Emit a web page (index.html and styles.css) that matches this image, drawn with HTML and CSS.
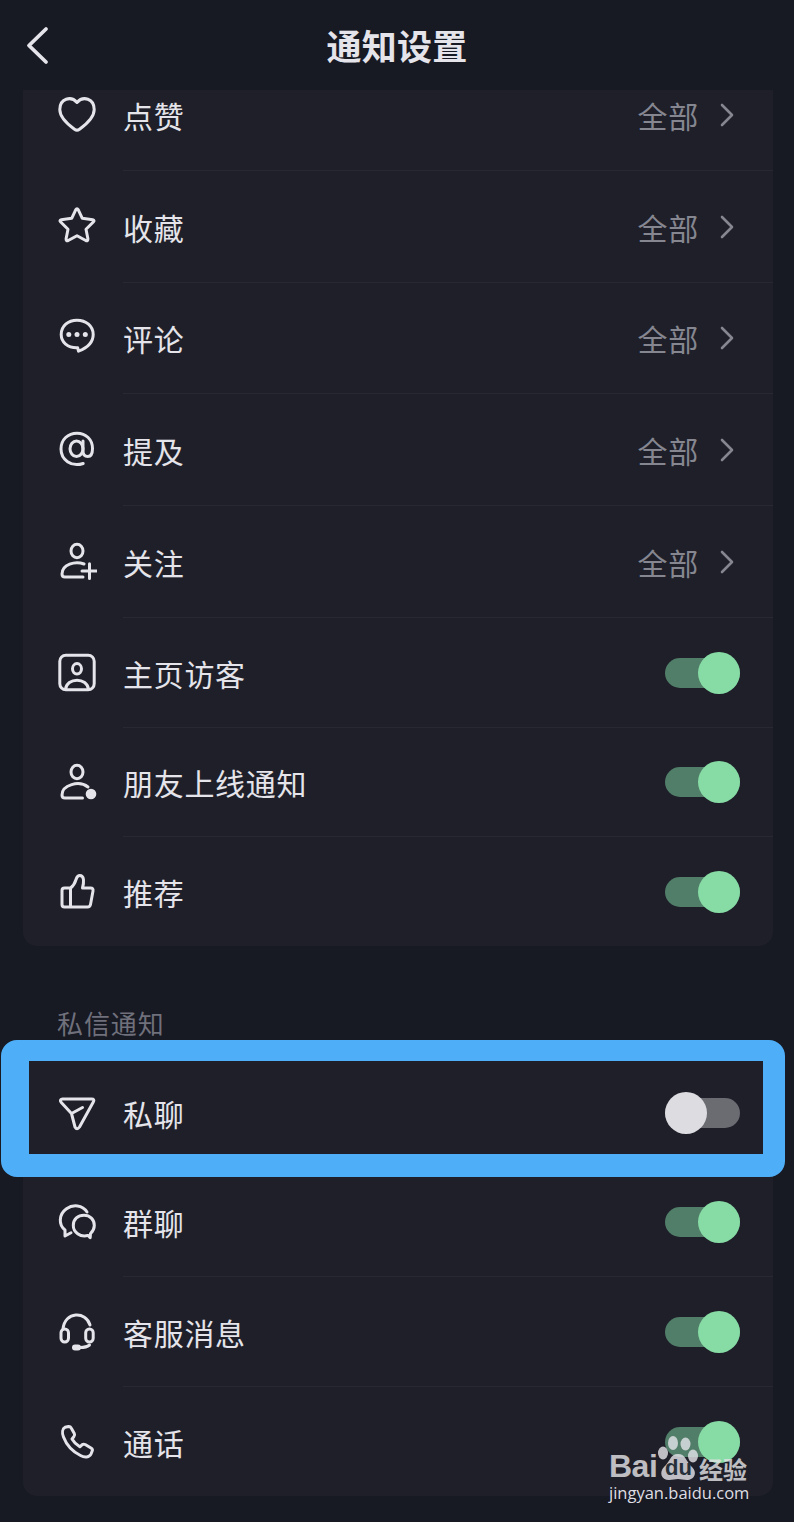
FILE: index.html
```
<!DOCTYPE html>
<html lang="zh-CN">
<head>
    <meta charset="UTF-8">
    <meta name="viewport" content="width=device-width, initial-scale=1.0">
    <title>通知设置</title>
    <link rel="stylesheet" href="styles.css">
</head>
<body>
    <header class="header">
        <svg class="back" viewBox="0 0 24 40"><path d="M20 4 L3 20.500 L20 37"/></svg>
        <h1>通知设置</h1>
    </header>

    <section class="card scrolled">
        <div class="row">
            <svg class="icon" viewBox="0 0 40 40"><path d="M20 7.500C14 .5 2.800 3.500 2.800 14.500C2.800 22 9.500 28.500 17.500 34.200Q20 36 22.500 34.200C30.500 28.500 37.200 22 37.200 14.500C37.200 3.500 26 .5 20 7.500Z"/></svg>
            <span class="label">点赞</span>
            <span class="value">全部</span>
            <svg class="arrow" viewBox="0 0 14 24"><path d="M2 2 L12 12 L2 22"/></svg>
        </div>
        <div class="row">
            <svg class="icon" viewBox="0 0 40 40"><path d="M18.700 2.800Q20 .5 21.300 2.800L25.300 11.300L35.700 12.800Q38 13.300 36.300 15L29 22.200L30.900 31.700Q31 34.400 28.800 33.500L20 28.700L11.200 33.500Q9 34.400 9.100 31.700L11 22.200L3.700 15Q2 13.300 4.300 12.800L14.700 11.300Z"/></svg>
            <span class="label">收藏</span>
            <span class="value">全部</span>
            <svg class="arrow" viewBox="0 0 14 24"><path d="M2 2 L12 12 L2 22"/></svg>
        </div>
        <div class="row">
            <svg class="icon" viewBox="0 0 40 40"><path d="M20.700 29.800C10.500 30.300 4.200 24 4.200 16.500C4.200 8 11 2.200 20 2.200S36.200 8 36.200 16.500C36.200 25 28.500 30.500 21.500 33.200Z"/><g class="solid"><circle cx="11.800" cy="16.500" r="2.500"/><circle cx="20" cy="16.500" r="2.500"/><circle cx="28.300" cy="16.500" r="2.500"/></g></svg>
            <span class="label">评论</span>
            <span class="value">全部</span>
            <svg class="arrow" viewBox="0 0 14 24"><path d="M2 2 L12 12 L2 22"/></svg>
        </div>
        <div class="row">
            <svg class="icon" viewBox="0 0 40 40"><path d="M26.200 33.500C14 37.500 4 29.500 4 19C4 9.500 11 3.200 20 3.200S35.500 9.500 35.500 18.500C35.500 24 34 26.500 30.800 26.500S26 24.500 26 21V11"/><ellipse cx="19.500" cy="18.700" rx="6.500" ry="7.800"/></svg>
            <span class="label">提及</span>
            <span class="value">全部</span>
            <svg class="arrow" viewBox="0 0 14 24"><path d="M2 2 L12 12 L2 22"/></svg>
        </div>
        <div class="row">
            <svg class="icon" viewBox="0 0 40 40"><ellipse cx="20" cy="9" rx="6" ry="6.700"/><path d="M27 22C18 18.500 5 22.500 5 32Q5 35 8 35H26M25 29H39.500M32.500 21.700V36.500"/></svg>
            <span class="label">关注</span>
            <span class="value">全部</span>
            <svg class="arrow" viewBox="0 0 14 24"><path d="M2 2 L12 12 L2 22"/></svg>
        </div>
        <div class="row short">
            <svg class="icon" viewBox="0 0 40 40"><rect x="2.800" y="2.300" width="34.400" height="34.400" rx="6"/><ellipse cx="20" cy="15.800" rx="4.500" ry="5.200"/><path d="M8.500 36.500C9.500 24 30.500 24 31.500 36.500"/></svg>
            <span class="label">主页访客</span>
            <span class="switch on"></span>
        </div>
        <div class="row short">
            <svg class="icon" viewBox="0 0 40 40"><ellipse cx="20" cy="10" rx="6" ry="6.700"/><path d="M31 25C22 18 5 23 5 33Q5 36 8 36H25.500"/><circle class="solid" cx="34" cy="32" r="5.300"/></svg>
            <span class="label">朋友上线通知</span>
            <span class="switch on"></span>
        </div>
        <div class="row short">
            <svg class="icon" viewBox="0 0 40 40"><path d="M13.500 16H7.500Q5 16 5 18.500V32.500Q5 35 7.500 35H30.500Q33 35 33.500 32.500L36 19Q36.500 16 33.500 16H25.500C27 10.500 27.500 3.500 22.800 3.500C17.500 3.500 21 10.500 13.500 16V35"/></svg>
            <span class="label">推荐</span>
            <span class="switch on"></span>
        </div>
    </section>

    <h2 class="section-title">私信通知</h2>

    <section class="card">
        <div class="row short">
            <svg class="icon" viewBox="0 0 40 40"><path d="M5.500 6H34.500Q38 6 36.300 9L22.500 34Q20 37.500 18 34L14.500 20.500L4.300 9.500Q2 6.500 5.500 6ZM14.500 20.500L25.500 14.500"/></svg>
            <span class="label">私聊</span>
            <span class="switch"></span>
        </div>
        <div class="row short">
            <svg class="icon" viewBox="0 0 40 40"><path d="M30 10C25.500 2.800 16 2 9.500 6.800C1.500 12.500 1.500 23 8 28V34L14 30.800"/><path d="M31 33.400C23 35.500 16.300 30 16.300 23.500C16.300 17 21 13.200 27 13.200S37.300 17.500 37.300 23.500Q37.300 28 33.500 31.500L33.200 35.700Z"/></svg>
            <span class="label">群聊</span>
            <span class="switch on"></span>
        </div>
        <div class="row short">
            <svg class="icon" viewBox="0 0 40 40"><path d="M6 17C8 -1 29 -1 33 13"/><rect x="4" y="17" width="7.500" height="13" rx="3.700"/><rect x="28.700" y="17" width="7.500" height="13" rx="3.700"/><path d="M23 35.500Q29.500 35.500 32.500 33"/><rect class="solid" x="15" y="32.500" width="9" height="6" rx="3"/></svg>
            <span class="label">客服消息</span>
            <span class="switch on"></span>
        </div>
        <div class="row short">
            <svg class="icon" viewBox="0 0 40 40"><path d="M8 5.300L11.500 4.500Q13.300 4.300 14.200 6L17.300 11.500Q18.200 13.200 16.800 14.800L15 17C17 20.500 19 22.500 22.800 24.800L25 22.800Q26.500 21.700 28.200 22.500L34 26Q36 27.200 35.200 29L34 32C32.500 35.500 27.500 35.700 23.500 33.500C15.500 29.500 9.500 23 6.500 15C4.800 10.500 5.500 6.500 8 5.300Z"/></svg>
            <span class="label">通话</span>
            <span class="switch on"></span>
        </div>
    </section>

    <div class="highlight"></div>

    <div class="watermark">
        <div class="brand">
            <span class="brand-latin">Bai</span>
            <span class="paw">
                <svg viewBox="0 0 42 46">
                    <ellipse cx="6" cy="17" rx="5" ry="6.500"/>
                    <ellipse cx="16" cy="7" rx="5" ry="7"/>
                    <ellipse cx="28.500" cy="8" rx="5" ry="6.500"/>
                    <ellipse cx="36" cy="20" rx="5" ry="6.500"/>
                    <path d="M21 18C29 18 29 26 35 31C41 37 37 44 30 44C26 44 24 43 21 43S16 44 12 44C4 44 2 36 7 31C13 26 13 18 21 18Z"/>
                </svg>
                <span class="du">du</span>
            </span>
            <span class="brand-cn">经验</span>
        </div>
        <div class="site">jingyan.baidu.com</div>
    </div>
</body>
</html>
```
FILE: styles.css
```
* {
    box-sizing: border-box;
}
body {
    position: relative;
    height: 1522px;
    margin: 0;
    overflow: hidden;
    background-color: #171923;
    color: #e4e4ea;
    font-family: "Noto Sans CJK SC", sans-serif;
}
h1, h2 {
    margin: 0;
}
svg {
    fill: none;
    stroke: currentColor;
    stroke-linecap: round;
    stroke-linejoin: round;
}
.header {
    display: grid;
    grid-template-columns: 60px 1fr 60px;
    align-items: center;
    height: 90px;
}
.header h1 {
    font-size: 35px;
    line-height: 50px;
    font-weight: 700;
    text-align: center;
    letter-spacing: 0.2px;
}
.back {
    width: 24px;
    height: 40px;
    margin-left: 26px;
    stroke-width: 3.8;
}
.card {
    margin: 0 21px 0 23px;
    background-color: #1e1f29;
    border-radius: 14px;
    overflow: hidden;
}
.scrolled {
    height: 856px;
    border-radius: 0 0 14px 14px;
}
/* the first row is partly under the header */
.scrolled .row:first-child {
    margin-top: -31px;
}
.row {
    display: flex;
    align-items: center;
    height: 111.8px;
    padding: 0 33px 0 34px;
    background: linear-gradient(#282832, #282832) 100px 100% / 100% 1px no-repeat;
}
.row:last-child {
    background: none;
}
.short {
    height: 109.6px;
}
.icon {
    width: 40px;
    height: 40px;
    margin-right: 26px;
    stroke-width: 3;
}
.solid {
    fill: currentColor;
    stroke: none;
}
.label, .value {
    font-size: 30px;
    line-height: 44px;
    letter-spacing: 0.7px;
}
.label {
    flex: 1;
}
.value {
    color: #858690;
}
.arrow {
    width: 14px;
    height: 24px;
    margin: 0 6px 0 21px;
    color: #858690;
    stroke-width: 2.6;
}
.switch {
    display: flex;
    align-items: center;
    width: 75px;
    height: 30px;
    border-radius: 15px;
    background-color: #6b6b72;
}
.switch::before {
    content: "";
    width: 42px;
    height: 42px;
    border-radius: 50%;
    background-color: #dcdce1;
}
.on {
    justify-content: flex-end;
    background-color: #517e68;
}
.on::before {
    background-color: #87dca5;
}
.section-title {
    height: 112px;
    padding: 58px 0 0 57px;
    font-size: 26px;
    line-height: 38px;
    font-weight: 400;
    letter-spacing: 0.9px;
    color: #6f707b;
}
.highlight {
    position: absolute;
    left: 1px;
    top: 1040px;
    width: 784px;
    height: 137px;
    border: solid #4eaef8;
    border-width: 21px 22px 23px 28px;
    border-radius: 16px;
}
.watermark {
    position: absolute;
    left: 609px;
    top: 1436px;
    width: 144px;
    color: rgba(226, 226, 230, 0.82);
}
.brand {
    display: flex;
    align-items: flex-end;
    height: 46px;
}
.brand-latin {
    width: 48px;
    font: 700 32px/32px "Liberation Sans", sans-serif;
    letter-spacing: -0.5px;
}
.paw {
    position: relative;
    width: 42px;
    height: 46px;
}
.paw svg {
    display: block;
    fill: currentColor;
    stroke: none;
}
.du {
    position: absolute;
    left: 8px;
    top: 20px;
    font: 700 22px/24px "Liberation Sans", sans-serif;
    color: #25303a;
}
.brand-cn {
    font-size: 24px;
    line-height: 26px;
    font-weight: 700;
}
.site {
    font: 16.5px/22px "Open Sans", sans-serif;
    color: #dedee2;
}
```
